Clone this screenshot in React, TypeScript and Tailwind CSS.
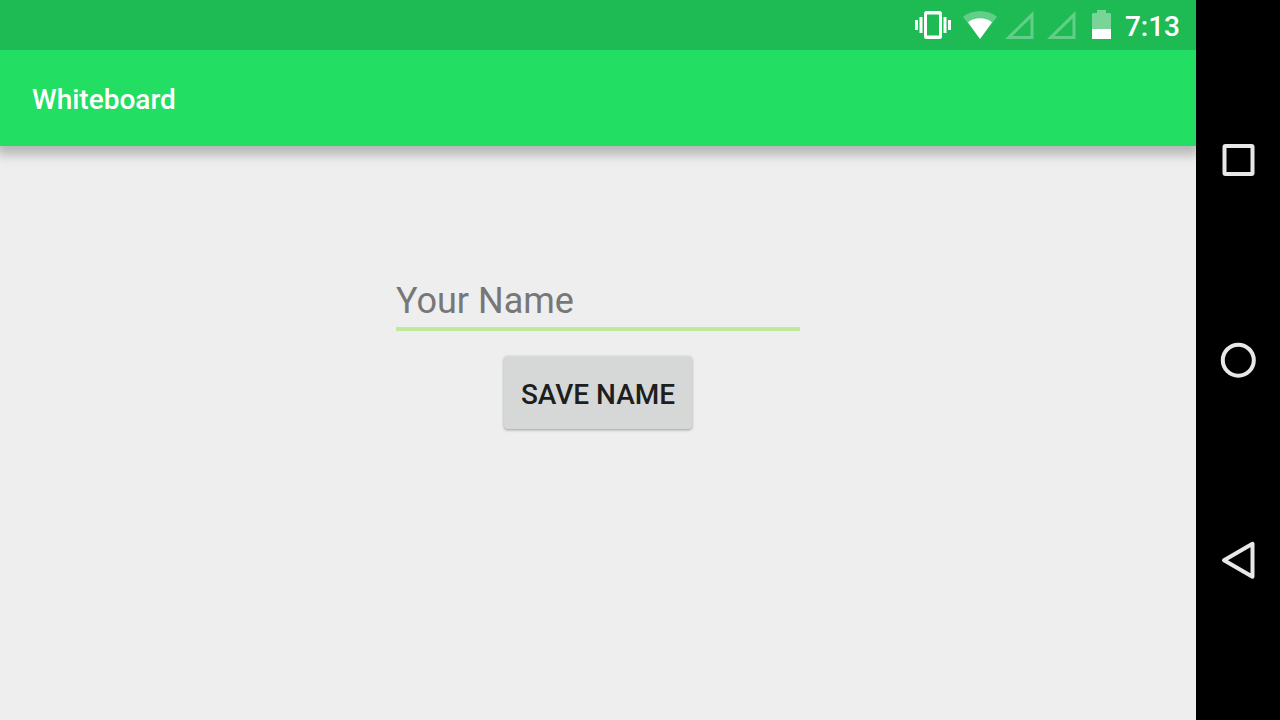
import { useState } from "react";

const VibrateIcon = () => (
  <svg width="36" height="30" viewBox="0 0 36 30" fill="#fff" aria-hidden="true">
    <path
      fillRule="evenodd"
      d="M11.500 1h13A2.500 2.500 0 0 1 27 3.500v23a2.500 2.500 0 0 1-2.500 2.500h-13A2.500 2.500 0 0 1 9 26.500v-23A2.500 2.500 0 0 1 11.500 1zM12 4.500v21h12v-21z"
    />
    <path d="M0 10h3v10H0zM4.500 7h3v16h-3zM28.500 7h3v16h-3zM33 10h3v10h-3z" />
  </svg>
);

const WifiIcon = () => (
  <svg width="34" height="30" viewBox="0 0 34 30" fill="#fff" aria-hidden="true">
    <path
      fillOpacity="0.3"
      d="M17 1C10.600 1 4.700 3.200 0 6.800L17 29 34 6.800C29.300 3.200 23.400 1 17 1z"
    />
    <path d="M17 8.200c-4.600 0-8.700 1.500-12 4L17 29l12-16.800c-3.300-2.500-7.400-4-12-4z" />
  </svg>
);

const SignalIcon = () => (
  <svg width="29" height="30" viewBox="0 0 29 30" fill="#fff" aria-hidden="true">
    <path fillOpacity="0.3" fillRule="evenodd" d="M28.500 1v28H0zM25.500 8.500 7.500 26h18z" />
  </svg>
);

const BatteryIcon = () => (
  <svg width="19" height="30" viewBox="0 0 19 30" fill="#fff" aria-hidden="true">
    <path fillOpacity="0.4" d="M5 0h9v3h4l1 1v15H0V4l1-1h4z" />
    <path d="M0 19h19v10H0z" />
  </svg>
);

const StatusBar = () => (
  <div className="flex h-[50px] items-center justify-end bg-[#1eba53] pr-4 text-white">
    <VibrateIcon />
    <div className="ml-3">
      <WifiIcon />
    </div>
    <div className="ml-2 flex gap-[13px]">
      <SignalIcon />
      <SignalIcon />
    </div>
    <div className="ml-4">
      <BatteryIcon />
    </div>
    <time className="ml-3.5 pt-1 text-[28px] leading-8 font-medium">7:13</time>
  </div>
);

const navButton =
  "flex flex-1 items-center justify-center cursor-pointer text-[#e8e8e8]";

const NavigationBar = () => (
  <nav className="flex w-[84px] shrink-0 flex-col bg-black py-[60px]">
    <button type="button" aria-label="Recent apps" className={navButton}>
      <svg width="40" height="40" viewBox="0 0 40 40" fill="none" stroke="currentColor" strokeWidth="4">
        <rect x="6.500" y="6" width="28" height="28" rx="1" />
      </svg>
    </button>
    <button type="button" aria-label="Home" className={navButton}>
      <svg width="40" height="40" viewBox="0 0 40 40" fill="none" stroke="currentColor" strokeWidth="4">
        <circle cx="20.300" cy="20.200" r="15.500" />
      </svg>
    </button>
    <button type="button" aria-label="Back" className={navButton}>
      <svg width="40" height="40" viewBox="0 0 40 40" fill="none" stroke="currentColor" strokeWidth="4" strokeLinejoin="round">
        <path d="M34.500 3.800v33L6 20.200z" />
      </svg>
    </button>
  </nav>
);

const App = () => {
  const [name, setName] = useState("");

  return (
    <div className="flex min-h-screen bg-[#eeeeee] font-['Roboto',sans-serif]">
      <div className="flex min-w-0 flex-1 flex-col overflow-hidden">
        <StatusBar />

        <header className="flex h-24 items-center bg-[#22de63] px-8 pt-1 shadow-[0_6px_10px_3px_rgba(0,0,0,0.23)] [clip-path:inset(0_0_-24px_0)]">
          <h1 className="text-[28px] leading-8 font-medium text-white">
            Whiteboard
          </h1>
        </header>

        <main className="flex flex-1 justify-center px-8 pt-[128px]">
          <form
            className="flex w-[404px] flex-col items-center"
            onSubmit={(e) => e.preventDefault()}
          >
            <input
              type="text"
              aria-label="Your Name"
              placeholder="Your Name"
              value={name}
              onChange={(e) => setName(e.target.value)}
              className="h-[57px] w-full border-b-4 border-[#bfe99b] bg-transparent text-[36px] leading-10 text-[#212121] placeholder:text-[#777777] focus:outline-none"
            />
            <button
              type="submit"
              className="mt-[25px] h-[73px] cursor-pointer rounded-[4px] bg-[#d6d8d7] px-[17px] pt-1 text-[28px] leading-8 font-medium text-[#1d1e1e] uppercase shadow-[0_1px_3px_rgba(0,0,0,0.35)]"
            >
              Save Name
            </button>
          </form>
        </main>
      </div>

      <NavigationBar />
    </div>
  );
};

export default App;
